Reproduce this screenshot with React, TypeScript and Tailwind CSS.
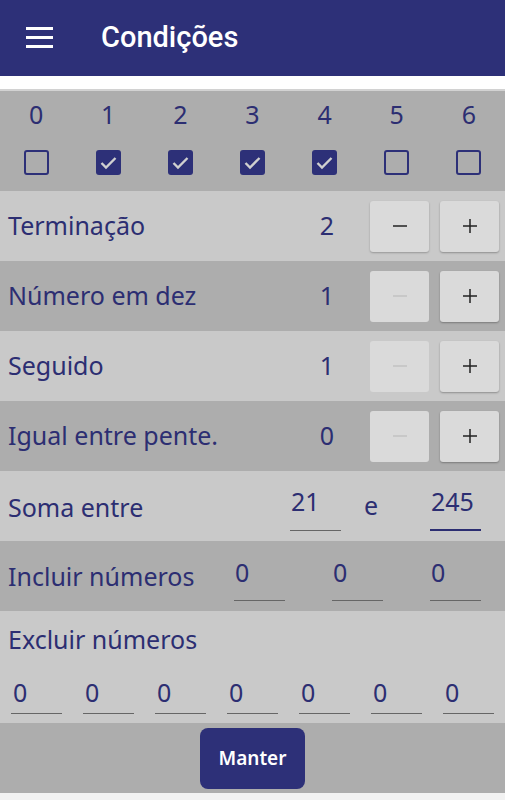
import { useState } from 'react';

const NAVY = 'text-[#2c2e72]';

function Stepper({ label, value, minusDisabled }: { label: string; value: number; minusDisabled: boolean }) {
  return (
    <>
      <span className="flex-1 pl-2">{label}</span>
      <span className="w-[40px] text-center mr-[23px]">{value}</span>
      <button
        className={`w-[59px] h-[51px] rounded-[3px] bg-[#dadada] shadow-[0_1px_2px_rgba(0,0,0,0.25)] flex items-center justify-center ${
          minusDisabled ? 'text-[#c2c2c2] shadow-none' : 'text-[#222]'
        }`}
      >
        <svg width="16" height="16" viewBox="0 0 16 16">
          <path d="M1 8h14" stroke="currentColor" strokeWidth="1.5" />
        </svg>
      </button>
      <button className="ml-[11px] mr-[6px] w-[59px] h-[51px] rounded-[3px] bg-[#dadada] shadow-[0_1px_2px_rgba(0,0,0,0.3)] flex items-center justify-center text-[#222]">
        <svg width="16" height="16" viewBox="0 0 16 16">
          <path d="M1 8h14M8 1v14" stroke="currentColor" strokeWidth="1.5" />
        </svg>
      </button>
    </>
  );
}

function Field({ value, active, className }: { value: string; active?: boolean; className?: string }) {
  return (
    <div
      className={`w-[51px] pl-[1px] leading-none ${active ? 'border-b-2 border-[#2c2e72]' : 'border-b border-[#666]'} ${className ?? ''}`}
    >
      {value}
    </div>
  );
}

export default function App() {
  const [checked] = useState([false, true, true, true, true, false, false]);
  const steppers = [
    { label: 'Terminação', value: 2, minusDisabled: false },
    { label: 'Número em dez', value: 1, minusDisabled: true },
    { label: 'Seguido', value: 1, minusDisabled: true },
    { label: 'Igual entre pente.', value: 0, minusDisabled: true },
  ];

  return (
    <div className={`w-[505px] h-[800px] bg-[#f2f2f2] font-['Noto_Sans',sans-serif] ${NAVY} text-[25px]`}>
      {/* top bar */}
      <div className="h-[76px] bg-[#2d3078] flex items-center">
        <div className="ml-[26px] mb-[1px] w-[27px] flex flex-col gap-[6px]">
          <div className="h-[3px] bg-white" />
          <div className="h-[3px] bg-white" />
          <div className="h-[3px] bg-white" />
        </div>
        <h1 className="ml-[48px] font-['Roboto',sans-serif] font-medium text-[29px] text-white">Condições</h1>
      </div>
      <div className="h-[13px] bg-white" />

      {/* days */}
      <div className="h-[102px] bg-[#adadad] border-t-2 border-[#d2d2d2] grid grid-cols-7">
        {checked.map((c, i) => (
          <div key={i} className="flex flex-col items-center pt-[8px]">
            <span className="leading-none h-[30px] flex items-center">{i}</span>
            <div
              className={`mt-[21px] w-[25px] h-[25px] rounded-[3px] flex items-center justify-center ${
                c ? 'bg-[#2d3078]' : 'border-[2.5px] border-[#2d3078]'
              }`}
            >
              {c && (
                <svg width="25" height="25" viewBox="0 0 25 25">
                  <path d="M5.5 13l4.5 4.5L19.5 8" fill="none" stroke="#d0d0d0" strokeWidth="2.4" />
                </svg>
              )}
            </div>
          </div>
        ))}
      </div>

      {steppers.map((s, i) => (
        <div key={s.label} className={`h-[70px] flex items-center ${i % 2 === 0 ? 'bg-[#c9c9c9]' : 'bg-[#adadad]'}`}>
          <Stepper {...s} />
        </div>
      ))}

      {/* soma */}
      <div className="h-[70px] bg-[#c9c9c9] flex items-center">
        <span className="flex-1 pl-2 mt-[4px]">Soma entre</span>
        <div className="flex items-end mt-[6px]">
          <Field value="21" className="pb-[16px]" />
          <span className="ml-[23px] mr-[52px] mb-[7px]">e</span>
          <Field value="245" active className="pb-[15px] mr-[24px]" />
        </div>
      </div>

      {/* incluir */}
      <div className="h-[70px] bg-[#adadad] flex items-center">
        <span className="flex-1 pl-2 mt-[2px]">Incluir números</span>
        <div className="flex gap-[47px] mr-[24px] mt-[8px]">
          <Field value="0" className="pb-[15px]" />
          <Field value="0" className="pb-[15px]" />
          <Field value="0" className="pb-[15px]" />
        </div>
      </div>

      {/* excluir */}
      <div className="h-[112px] bg-[#c9c9c9] px-2 pt-[16px]">
        <div className="leading-none">Excluir números</div>
        <div className="mt-[28px] flex justify-between pl-[3px] pr-[3px]">
          {Array.from({ length: 7 }).map((_, i) => (
            <Field key={i} value="0" className="pb-[8px] pl-[2px]" />
          ))}
        </div>
      </div>

      {/* manter */}
      <div className="h-[70px] bg-[#adadad] flex items-center justify-center">
        <button className="w-[105px] h-[61px] rounded-[8px] bg-[#2d3078] text-white text-[19px] font-semibold">
          Manter
        </button>
      </div>
    </div>
  );
}
